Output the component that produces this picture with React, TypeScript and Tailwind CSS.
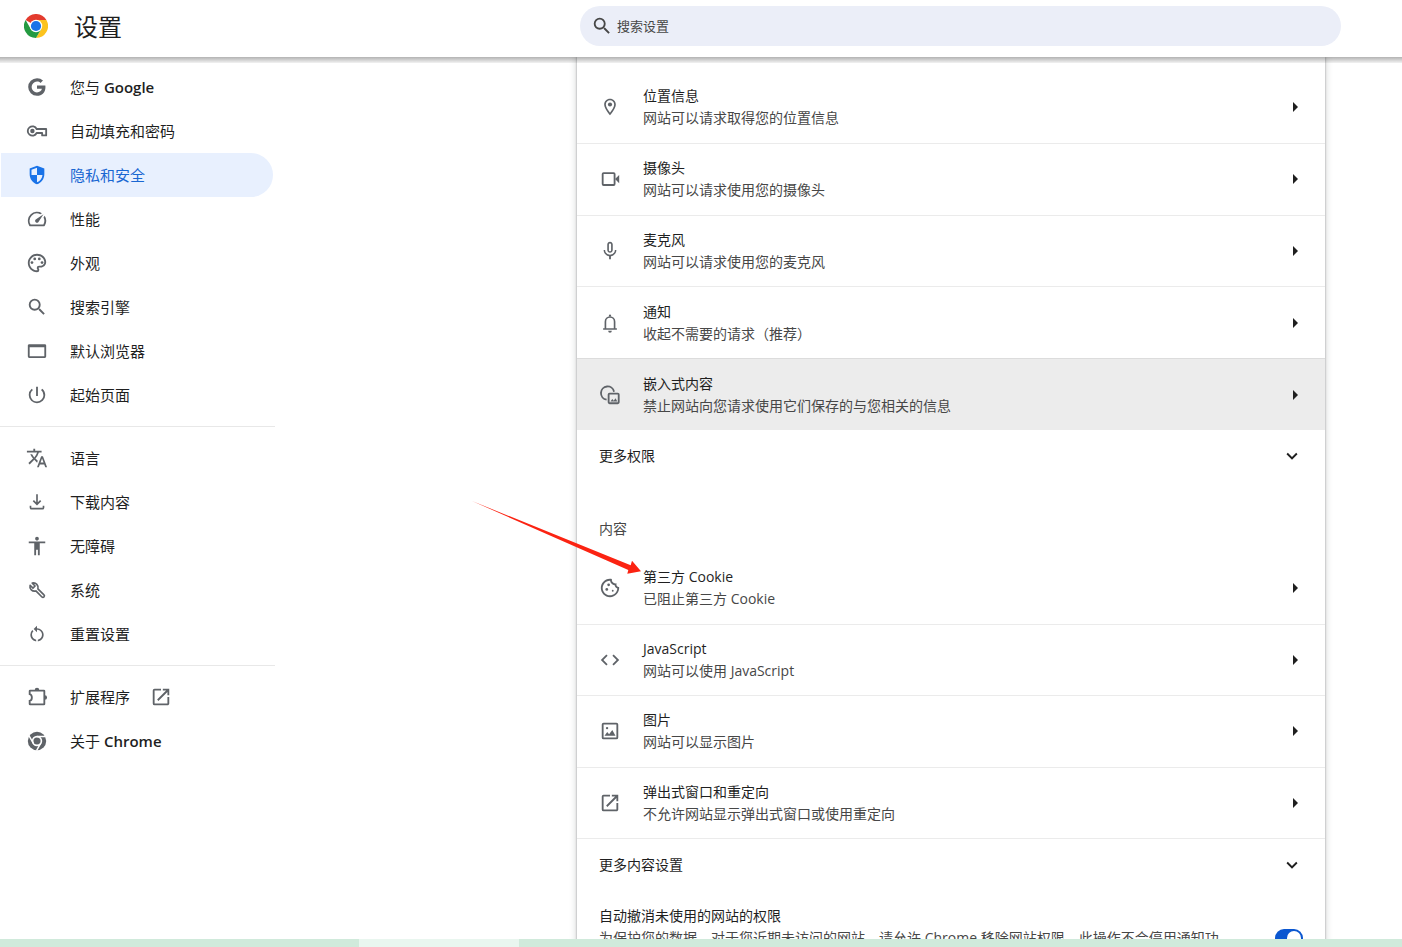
import { useId, useState } from 'react';
import type { ReactNode } from 'react';
import {
  MdAccessibility,
  MdArrowRight,
  MdCode,
  MdExpandMore,
  MdMicNone,
  MdOpenInNew,
  MdOutlineCookie,
  MdOutlineLocationOn,
  MdOutlinePalette,
  MdPowerSettingsNew,
  MdRestartAlt,
  MdSearch,
  MdSpeed,
  MdTranslate,
} from 'react-icons/md';

type Item = { label: ReactNode; icon: ReactNode; external?: boolean };
type Setting = { title: string; sub: string; icon: ReactNode; hovered?: boolean };

const iconSize = 'size-[22px] shrink-0';

function ChromeLogo() {
  return (
    <svg className="size-6 shrink-0" viewBox="0 0 48 48" aria-hidden="true">
      <path fill="#e33b2e" d="M24 24 3.2 12A24 24 0 0 1 44.8 12Z" />
      <path fill="#fcc31e" d="M24 12h20.8A24 24 0 0 1 24 48l10.4-18Z" />
      <path fill="#249a41" d="M3.2 12 13.6 30 34.4 30 24 48A24 24 0 0 1 3.2 12Z" />
      <circle cx="24" cy="24" r="12.5" fill="#fff" />
      <circle cx="24" cy="24" r="10.2" fill="#1a73e8" />
    </svg>
  );
}

function GoogleIcon() {
  return (
    <svg className={iconSize} viewBox="-1 -1 20 20" fill="currentColor" aria-hidden="true">
      <path d="M16.58 7.6H9v3h4.47c-.4 1.9-2 3.3-4.47 3.3A4.9 4.9 0 1 1 9 4.1c1.3 0 2.4.45 3.2 1.2l2.25-2.25A8 8 0 0 0 9 1a8 8 0 1 0 0 16c4.62 0 7.68-3.25 7.68-7.82 0-.55-.04-1.1-.1-1.58z" />
    </svg>
  );
}

function KeyIcon() {
  return (
    <svg className={iconSize} viewBox="0 0 24 24" aria-hidden="true">
      <path
        d="M11.6 9.8h10.4v7h-4.4v-2.6h-6a5.1 5.1 0 1 1 0-4.4z"
        fill="none"
        stroke="currentColor"
        strokeWidth="2"
        strokeLinejoin="round"
      />
      <circle cx="7" cy="12" r="2.4" fill="currentColor" />
    </svg>
  );
}

function ShieldIcon() {
  return (
    <svg className={iconSize} viewBox="0 0 24 24" fill="currentColor" aria-hidden="true">
      <path d="M12 2 4 5v6.1c0 5 3.4 9.7 8 10.9 4.6-1.2 8-5.9 8-10.9V5l-8-3zm0 10h6c-.4 3.7-2.7 6.9-6 7.9V12H6V6.4l6-2.3V12z" />
    </svg>
  );
}

function BrowserIcon() {
  return (
    <svg className={iconSize} viewBox="0 0 24 24" fill="currentColor" aria-hidden="true">
      <path fillRule="evenodd" d="M3.5 4.5h17A1.5 1.5 0 0 1 22 6v12a1.5 1.5 0 0 1-1.5 1.5h-17A1.5 1.5 0 0 1 2 18V6c0-.8.7-1.5 1.5-1.5zM4 8v9.7h16V8H4z" />
    </svg>
  );
}

function DownloadIcon() {
  return (
    <svg className={iconSize} viewBox="0 0 24 24" fill="none" stroke="currentColor" strokeWidth="1.8" aria-hidden="true">
      <path d="M12 3.5v11M8 10.5l4 4 4-4M4.9 16v2.3a1 1 0 0 0 1 1h12.2a1 1 0 0 0 1-1V16" />
    </svg>
  );
}

function WrenchIcon() {
  return (
    <svg className={iconSize} viewBox="0 0 24 24" fill="none" stroke="currentColor" strokeWidth="1.8" strokeLinejoin="round" aria-hidden="true">
      <path d="M4.5 6.8 7.6 9.9 9.9 7.6 6.8 4.5A5 5 0 0 1 13 10.8L19.6 17.4a1.5 1.5 0 0 1-2.2 2.2L10.8 13A5 5 0 0 1 4.5 6.8z" />
    </svg>
  );
}

function ExtensionIcon() {
  return (
    <svg className={iconSize} viewBox="0 0 24 24" aria-hidden="true">
      <path
        d="M4.5 5h15a.5.5 0 0 1 .5.5v14a.5.5 0 0 1-.5.5h-15a.5.5 0 0 1-.5-.5v-3.3c3.2-.7 3.2-6.7 0-7.4V5.5a.5.5 0 0 1 .5-.5z"
        fill="none"
        stroke="currentColor"
        strokeWidth="2"
      />
      <path d="M9.5 4.5a2.5 2.5 0 0 1 5 0zM20.5 10a2.5 2.5 0 0 1 0 5z" fill="currentColor" />
    </svg>
  );
}

function ChromeIcon() {
  return (
    <svg className={iconSize} viewBox="0 0 24 24" aria-hidden="true">
      <circle cx="12" cy="12" r="10" fill="currentColor" />
      <circle cx="12" cy="12" r="4.8" fill="none" stroke="#fff" strokeWidth="1.8" />
      <path d="M12 7.2h9.5M7.9 14.4 3.2 6.2M16.1 14.4l-4.6 8" stroke="#fff" strokeWidth="1.6" />
    </svg>
  );
}

function CameraIcon() {
  return (
    <svg className={iconSize} viewBox="0 0 24 24" aria-hidden="true">
      <rect x="4" y="5.5" width="13" height="13" rx="1" fill="none" stroke="currentColor" strokeWidth="2" />
      <path d="M17.5 12 22 7.5v9z" fill="currentColor" />
    </svg>
  );
}

function BellIcon() {
  return (
    <svg className={iconSize} viewBox="0 0 24 24" aria-hidden="true">
      <path d="M4.5 18.5h15M7 18.5v-8a5 5 0 0 1 10 0v8" fill="none" stroke="currentColor" strokeWidth="1.8" />
      <path d="M10.8 5V3.8a1.2 1.2 0 0 1 2.4 0V5zM10 20.5h4a2 2 0 0 1-4 0z" fill="currentColor" />
    </svg>
  );
}

function EmbeddedIcon() {
  return (
    <svg className={iconSize} viewBox="0 0 24 24" aria-hidden="true">
      <path d="M8.3 17A7.2 7.2 0 1 1 16.4 8.4" fill="none" stroke="currentColor" strokeWidth="2" />
      <rect x="10.5" y="10.5" width="11" height="10.5" rx="1" fill="none" stroke="currentColor" strokeWidth="2" />
      <path d="m12.5 19.2 2-2.8 1.6 1.8 1.9-2.6 2 3.6z" fill="currentColor" />
    </svg>
  );
}

function ImageIcon() {
  return (
    <svg className={iconSize} viewBox="0 0 24 24" aria-hidden="true">
      <rect x="4" y="4" width="16" height="16" rx="1" fill="none" stroke="currentColor" strokeWidth="2" />
      <path d="m6 17.2 3-4.2 2 2.6 3.5-4.6 3.5 6.2z" fill="currentColor" />
      <circle cx="8.8" cy="8.8" r="1.3" fill="currentColor" />
    </svg>
  );
}

const navGroups: Item[][] = [
  [
    { label: <>您与 <span className="font-semibold">Google</span></>, icon: <GoogleIcon /> },
    { label: '自动填充和密码', icon: <KeyIcon /> },
    { label: '隐私和安全', icon: <ShieldIcon /> },
    { label: '性能', icon: <MdSpeed className={iconSize} /> },
    { label: '外观', icon: <MdOutlinePalette className={iconSize} /> },
    { label: '搜索引擎', icon: <MdSearch className={iconSize} /> },
    { label: '默认浏览器', icon: <BrowserIcon /> },
    { label: '起始页面', icon: <MdPowerSettingsNew className={iconSize} /> },
  ],
  [
    { label: '语言', icon: <MdTranslate className={iconSize} /> },
    { label: '下载内容', icon: <DownloadIcon /> },
    { label: '无障碍', icon: <MdAccessibility className={iconSize} /> },
    { label: '系统', icon: <WrenchIcon /> },
    { label: '重置设置', icon: <MdRestartAlt className={`${iconSize} p-px`} /> },
  ],
  [
    { label: '扩展程序', icon: <ExtensionIcon />, external: true },
    { label: <>关于 <span className="font-semibold">Chrome</span></>, icon: <ChromeIcon /> },
  ],
];

const permissions: Setting[] = [
  { title: '位置信息', sub: '网站可以请求取得您的位置信息', icon: <MdOutlineLocationOn className={`${iconSize} p-px`} /> },
  { title: '摄像头', sub: '网站可以请求使用您的摄像头', icon: <CameraIcon /> },
  { title: '麦克风', sub: '网站可以请求使用您的麦克风', icon: <MdMicNone className={iconSize} /> },
  { title: '通知', sub: '收起不需要的请求（推荐）', icon: <BellIcon /> },
  { title: '嵌入式内容', sub: '禁止网站向您请求使用它们保存的与您相关的信息', icon: <EmbeddedIcon />, hovered: true },
];

const contents: Setting[] = [
  { title: '第三方 Cookie', sub: '已阻止第三方 Cookie', icon: <MdOutlineCookie className={iconSize} /> },
  { title: 'JavaScript', sub: '网站可以使用 JavaScript', icon: <MdCode className={iconSize} /> },
  { title: '图片', sub: '网站可以显示图片', icon: <ImageIcon /> },
  { title: '弹出式窗口和重定向', sub: '不允许网站显示弹出式窗口或使用重定向', icon: <MdOpenInNew className={iconSize} /> },
];

function SettingRow({ item, first }: { item: Setting; first: boolean }) {
  return (
    <button
      type="button"
      className={`flex w-full items-center gap-[22px] pl-[22px] pr-[18px] text-left ${first ? 'pt-px' : 'border-t'} ${
        item.hovered ? 'border-[#dcdcdc] bg-[#ececec]' : 'border-[#ebebeb]'
      }`}
    >
      <span className="text-[#5f6368]">{item.icon}</span>
      <span className="flex-1">
        <span className="block">{item.title}</span>
        <span className="block text-[#474747]">{item.sub}</span>
      </span>
      <MdArrowRight className="size-6 shrink-0" />
    </button>
  );
}

function ExpandRow({ label }: { label: string }) {
  return (
    <button type="button" className="flex h-[52px] w-full items-center justify-between px-[22px] text-left">
      <span>{label}</span>
      <MdExpandMore className="size-[22px] shrink-0" />
    </button>
  );
}

export default function App() {
  const [autoRevoke, setAutoRevoke] = useState(true);
  const revokeId = useId();

  return (
    <div className="flex h-screen flex-col overflow-hidden bg-white font-['Open_Sans','Noto_Sans_CJK_SC',sans-serif] text-sm text-[#1f1f1f]">
      {/* Toolbar */}
      <header className="relative z-10 flex h-[57px] shrink-0 items-start bg-white">
        <div className="flex h-[52px] w-[580px] shrink-0 items-center gap-[26px] pl-6">
          <ChromeLogo />
          <h1 className="pt-0.5 text-2xl">设置</h1>
        </div>
        <label className="mr-[61px] mt-1.5 flex h-10 flex-1 items-center gap-1 rounded-full bg-[#ebeef8] pl-[11px] text-[#474747]">
          <MdSearch className="size-[22px] shrink-0" />
          <input
            type="text"
            aria-label="搜索设置"
            placeholder="搜索设置"
            className="flex-1 bg-transparent text-[13px] outline-none placeholder:text-[#474747]"
          />
        </label>
        <div className="absolute inset-x-0 top-full h-1.5 bg-linear-to-b from-black/30 to-black/5" />
      </header>

      <div className="flex min-h-0 flex-1 overflow-hidden">
        {/* Side menu */}
        <nav className="w-[275px] shrink-0 pt-2">
          {navGroups.map((group, g) => (
            <div key={g}>
              {g > 0 && <hr className="my-[9px] border-[#e8e8e8]" />}
              {group.map((item, i) => {
                const active = g === 0 && i === 2;
                return (
                  <a
                    key={i}
                    href="#"
                    className={`ml-px mr-0.5 flex h-11 items-center gap-[22px] rounded-r-full pl-[25px] text-[15px] ${
                      active ? 'bg-[#e8f0fe] text-[#1967d2]' : ''
                    }`}
                  >
                    <span className={active ? 'text-[#1a73e8]' : 'text-[#5f6368]'}>{item.icon}</span>
                    <span className="flex items-center gap-5">
                      <span className="pt-0.5">{item.label}</span>
                      {item.external && <MdOpenInNew className="size-[22px] shrink-0 text-[#5f6368]" />}
                    </span>
                  </a>
                );
              })}
            </div>
          ))}
        </nav>

        {/* Site settings */}
        <main className="min-w-0 flex-1 pl-[302px] pr-[77px]">
          <div className="relative min-h-full bg-white pt-3.5 leading-[22px] shadow-[0_0_2px_rgba(60,64,67,0.5),0_0_6px_2px_rgba(60,64,67,0.15)]">
            <div className="grid min-h-[359px] auto-rows-fr">
              {permissions.map((item, i) => (
                <SettingRow key={item.title} item={item} first={i === 0} />
              ))}
            </div>
            <ExpandRow label="更多权限" />

            <h2 className="px-[22px] pb-3 pt-9 text-[#474747]">内容</h2>
            <div className="grid min-h-[287px] auto-rows-fr border-b border-[#ebebeb]">
              {contents.map((item, i) => (
                <SettingRow key={item.title} item={item} first={i === 0} />
              ))}
            </div>
            <ExpandRow label="更多内容设置" />

            <div className="flex items-start justify-between px-[22px] pt-3.5">
              <label htmlFor={revokeId}>
                <span className="block">自动撤消未使用的网站的权限</span>
                <span className="block text-[#474747]">
                  为保护您的数据，对于您近期未访问的网站，请允许 Chrome 移除网站权限。此操作不会停用通知功
                </span>
              </label>
              <span className="relative mt-6 flex h-[18px] w-7 shrink-0 items-center">
                <input
                  id={revokeId}
                  type="checkbox"
                  role="switch"
                  checked={autoRevoke}
                  onChange={(e) => setAutoRevoke(e.target.checked)}
                  className="peer h-[18px] w-7 appearance-none rounded-full bg-[#747775] checked:bg-[#0b57d0]"
                />
                <span className="pointer-events-none absolute left-0.5 size-3.5 rounded-full bg-white peer-checked:left-3" />
              </span>
            </div>

            {/* Pointer to the third-party cookie row */}
            <svg
              className="pointer-events-none absolute -left-[105px] top-[444px] h-[76px] w-[172px]"
              viewBox="0 0 172 76"
              aria-hidden="true"
            >
              <path fill="#fb2312" d="M0 0 158.7 64.3 160 59.7 169 70.3 155.3 72.7 156.3 69Z" />
            </svg>
          </div>
        </main>
      </div>

      {/* Taskbar edge */}
      <footer className="flex h-2 shrink-0 bg-[#d0eadb]">
        <div className="ml-[359px] w-40 bg-[#e9f6ef]" />
      </footer>
    </div>
  );
}
